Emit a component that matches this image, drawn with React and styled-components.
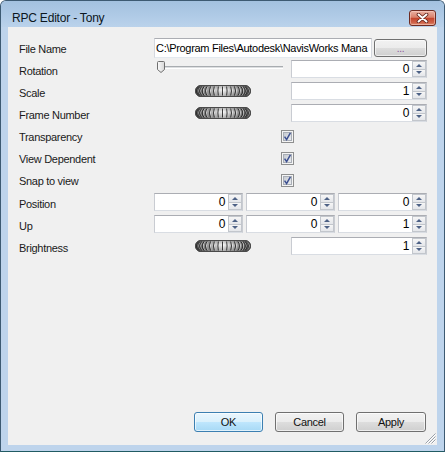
import React from "react";
import styled, { createGlobalStyle } from "styled-components";

const Global = createGlobalStyle`
  html, body { margin: 0; padding: 0; background: #ffffff; }
  body {
    font-family: "Liberation Sans", Arial, sans-serif;
    font-size: 11px;
    letter-spacing: -0.3px;
    color: #000;
  }
  * { box-sizing: border-box; }
`;

const Window = styled.div`
  width: 445px;
  height: 452px;
  display: flex;
  flex-direction: column;
  background: #bed4ec;
  border: 1px solid #3d5a72;
  border-bottom-color: #215b63;
  border-radius: 6px 6px 0 0;
  overflow: hidden;
`;

const TitleBar = styled.div`
  height: 26px;
  flex: none;
  display: flex;
  align-items: flex-start;
  justify-content: space-between;
  padding: 9px 8px 0 11px;
  background: linear-gradient(to bottom, #a3c1df 0%, #afcae6 55%, #bad2eb 100%);
`;

const Title = styled.div`
  font-size: 12px;
  line-height: 14px;
  letter-spacing: -0.2px;
  color: #0b1620;
  padding-top: 1px;
`;

const CloseBtn = styled.div`
  width: 27px;
  height: 16px;
  border: 1px solid #6e2b21;
  border-radius: 3px;
  display: flex;
  align-items: center;
  justify-content: center;
  background: linear-gradient(to bottom, #eab1a3 0%, #d9806b 45%, #c4452d 52%, #d0654b 85%, #e0957a 100%);
  box-shadow: inset 0 0 0 1px rgba(255, 220, 210, 0.45);
`;

const Frame = styled.div`
  flex: 1;
  display: flex;
  min-width: 0;
  padding: 0 7px 6px 7px;
`;

const Content = styled.div`
  flex: 1;
  min-width: 0;
  position: relative;
  display: flex;
  flex-direction: column;
  justify-content: space-between;
  background: #f0f0f0;
  padding: 11px 10px 13px 11px;
`;

const Form = styled.div`
  display: flex;
  flex-direction: column;
`;

const Row = styled.div`
  display: grid;
  grid-template-columns: 135px minmax(0, 1fr);
  align-items: start;
  height: 22px;
  padding-top: ${(p) => p.$pad || 0}px;
`;

const Label = styled.div`
  line-height: 18px;
  padding-top: 2px;
  white-space: nowrap;
  color: #1a1a1a;
`;

const Split = styled.div`
  display: grid;
  grid-template-columns: 137px minmax(0, 1fr);
  align-items: start;
`;

const Triple = styled.div`
  display: grid;
  grid-template-columns: repeat(3, minmax(0, 1fr));
  gap: 3px;
`;

const FileLine = styled.div`
  display: flex;
  align-items: flex-start;
  gap: 2px;
  min-width: 0;
`;

const TextField = styled.div`
  flex: 1;
  min-width: 0;
  height: 20px;
  background: #fff;
  border: 1px solid #abadb3;
  border-color: #abadb3 #d5d8de #e3e9ef #d5d8de;
  padding: 0 1px;
  line-height: 18px;
  font-size: 11px;
  white-space: nowrap;
  overflow: hidden;
`;

const DotsBtn = styled.div`
  flex: none;
  width: 53px;
  height: 18px;
  margin-top: 1px;
  border: 1px solid #707070;
  border-radius: 3px;
  background: linear-gradient(to bottom, #f2f2f2 0%, #ebebeb 50%, #dddddd 51%, #cfcfcf 100%);
  box-shadow: inset 0 0 0 1px rgba(255, 255, 255, 0.6);
  color: #8a4f9a;
  font-size: 10px;
  text-align: center;
  line-height: 17px;
`;

const SpinWrap = styled.div`
  height: 18px;
  min-width: 0;
  display: flex;
  background: #fff;
  border: 1px solid #abadb3;
  border-color: #abadb3 #c9ccd2 #d9dde3 #c9ccd2;
`;

const SpinValue = styled.div`
  flex: 1;
  text-align: right;
  padding-right: 3px;
  font-size: 12px;
  line-height: 16px;
`;

const SpinBtns = styled.div`
  width: 14px;
  display: flex;
  flex-direction: column;
`;

const SpinBtn = styled.div`
  flex: 1;
  display: flex;
  align-items: center;
  justify-content: center;
  border: 1px solid #c2c6cc;
  border-top-width: ${(p) => (p.$down ? 0 : 1)}px;
  background: linear-gradient(to bottom, #f6f6f6, #e4e6ea);
`;

const Center = styled.div`
  height: 18px;
  display: flex;
  align-items: center;
  justify-content: center;
`;

const SliderBox = styled.div`
  position: relative;
  height: 18px;
`;

const Track = styled.div`
  position: absolute;
  left: 4px;
  right: 8px;
  top: 6px;
  height: 3px;
  border-top: 1px solid #a8acb0;
  border-bottom: 1px solid #ffffff;
  background: #dcdee0;
`;

const Thumb = styled.div`
  position: absolute;
  left: 3px;
  top: 1px;
  width: 8px;
  height: 12px;
  display: flex;
`;

const CheckCell = styled.div`
  padding-left: 127px;
  padding-top: 4px;
  display: flex;
`;

const ButtonBar = styled.div`
  display: flex;
  justify-content: flex-end;
  gap: 12px;
  padding-right: 1px;
`;

const Button = styled.div`
  width: ${(p) => p.$w || 69}px;
  height: 20px;
  border: 1px solid ${(p) => (p.$default ? "#3c7fb1" : "#707070")};
  border-radius: 3px;
  background: ${(p) =>
    p.$default
      ? "linear-gradient(to bottom, #eaf6fd 0%, #d9f0fc 50%, #bee6fd 51%, #a7d9f5 100%)"
      : "linear-gradient(to bottom, #f2f2f2 0%, #ebebeb 50%, #dddddd 51%, #cfcfcf 100%)"};
  box-shadow: inset 0 0 0 1px rgba(255, 255, 255, 0.65);
  text-align: center;
  line-height: 18px;
  font-size: 11px;
  color: #111;
`;

const Grip = styled.div`
  position: absolute;
  right: 1px;
  bottom: 1px;
  width: 11px;
  height: 11px;
  display: flex;
`;

function Arrow({ down }) {
  return (
    <svg width="6" height="3" viewBox="0 0 6 3">
      {down ? (
        <path d="M0 0 H6 L3 3 Z" fill="#4d6185" />
      ) : (
        <path d="M0 3 H6 L3 0 Z" fill="#4d6185" />
      )}
    </svg>
  );
}

function Spin({ value }) {
  return (
    <SpinWrap>
      <SpinValue>{value}</SpinValue>
      <SpinBtns>
        <SpinBtn>
          <Arrow />
        </SpinBtn>
        <SpinBtn $down>
          <Arrow down />
        </SpinBtn>
      </SpinBtns>
    </SpinWrap>
  );
}

function Jog() {
  const ridges = Array.from({ length: 17 }, (_, i) => {
    const k = i - 8;
    const t = (k / 9) * (Math.PI / 2);
    return { x: 27.5 + 24 * Math.sin(t), b: 2.4 * Math.sin(t) };
  });
  return (
    <svg width="56" height="12" viewBox="0 0 56 12">
      <defs>
        <linearGradient id="jogGrad" x1="0" x2="1" y1="0" y2="0">
          <stop offset="0" stopColor="#3c3c3c" />
          <stop offset="0.2" stopColor="#9c9c9c" />
          <stop offset="0.5" stopColor="#f6f6f6" />
          <stop offset="0.8" stopColor="#9c9c9c" />
          <stop offset="1" stopColor="#3c3c3c" />
        </linearGradient>
        <linearGradient id="jogShade" x1="0" x2="0" y1="0" y2="1">
          <stop offset="0" stopColor="#000" stopOpacity="0.25" />
          <stop offset="0.4" stopColor="#000" stopOpacity="0" />
          <stop offset="1" stopColor="#000" stopOpacity="0.3" />
        </linearGradient>
      </defs>
      <rect x="0.5" y="0.5" width="55" height="11" rx="5.5" fill="url(#jogGrad)" stroke="#505050" />
      {ridges.map((r, i) => (
        <g key={i}>
          <path
            d={`M${(r.x + 0.9).toFixed(2)} 1.5 Q${(r.x + 0.9 + r.b * 2).toFixed(2)} 6 ${(r.x + 0.9).toFixed(2)} 10.5`}
            stroke="#ffffff"
            strokeOpacity="0.8"
            strokeWidth="0.8"
            fill="none"
          />
          <path
            d={`M${r.x.toFixed(2)} 1.5 Q${(r.x + r.b * 2).toFixed(2)} 6 ${r.x.toFixed(2)} 10.5`}
            stroke="#2a2a2a"
            strokeWidth="0.9"
            fill="none"
          />
        </g>
      ))}
      <rect x="0.5" y="0.5" width="55" height="11" rx="5.5" fill="url(#jogShade)" stroke="#4a4a4a" />
    </svg>
  );
}

function Check() {
  return (
    <svg width="13" height="13" viewBox="0 0 13 13">
      <defs>
        <linearGradient id="cbIn" x1="0" x2="1" y1="0" y2="1">
          <stop offset="0" stopColor="#c4c8cf" />
          <stop offset="1" stopColor="#eceef1" />
        </linearGradient>
      </defs>
      <rect x="0.5" y="0.5" width="12" height="12" fill="#f4f4f4" stroke="#8e8f8f" />
      <rect x="2.5" y="2.5" width="8" height="8" fill="url(#cbIn)" stroke="#a9aeb6" />
      <path d="M3.6 6.6 L5.6 9.6 L9.4 2.8" stroke="#3f5292" strokeWidth="1.5" fill="none" />
    </svg>
  );
}

function ThumbShape() {
  return (
    <svg width="8" height="12" viewBox="0 0 8 12">
      <defs>
        <linearGradient id="thumbG" x1="0" x2="1" y1="0" y2="0">
          <stop offset="0" stopColor="#fbfbfb" />
          <stop offset="1" stopColor="#d6d6d6" />
        </linearGradient>
      </defs>
      <path d="M1.5 0.5 H6.5 Q7.5 0.5 7.5 1.5 V8.5 L4 11.5 L0.5 8.5 V1.5 Q0.5 0.5 1.5 0.5 Z" fill="url(#thumbG)" stroke="#6f6f6f" />
    </svg>
  );
}

function CloseX() {
  return (
    <svg width="13" height="10" viewBox="0 0 13 10">
      <path d="M2.5 1.5 L10.5 8.5 M10.5 1.5 L2.5 8.5" stroke="#5b1f16" strokeWidth="3.6" strokeLinecap="round" />
      <path d="M2.5 1.5 L10.5 8.5 M10.5 1.5 L2.5 8.5" stroke="#ffffff" strokeWidth="2" strokeLinecap="round" />
    </svg>
  );
}

function GripShape() {
  return (
    <svg width="11" height="11" viewBox="0 0 11 11">
      {[3, 6, 9].map((o) => (
        <g key={o}>
          <path d={`M${10.5 - o} 10.5 L10.5 ${10.5 - o}`} stroke="#ffffff" strokeWidth="1" />
          <path d={`M${9.5 - o} 10.5 L10.5 ${9.5 - o}`} stroke="#9aa0a8" strokeWidth="1" />
        </g>
      ))}
    </svg>
  );
}

export default function App() {
  return (
    <>
      <Global />
      <Window>
        <TitleBar>
          <Title>RPC Editor - Tony</Title>
          <CloseBtn>
            <CloseX />
          </CloseBtn>
        </TitleBar>
        <Frame>
          <Content>
            <Form>
              <Row>
                <Label>File Name</Label>
                <FileLine>
                  <TextField>C:\Program Files\Autodesk\NavisWorks Mana</TextField>
                  <DotsBtn>...</DotsBtn>
                </FileLine>
              </Row>
              <Row>
                <Label>Rotation</Label>
                <Split>
                  <SliderBox>
                    <Track />
                    <Thumb>
                      <ThumbShape />
                    </Thumb>
                  </SliderBox>
                  <Spin value="0" />
                </Split>
              </Row>
              <Row>
                <Label>Scale</Label>
                <Split>
                  <Center>
                    <Jog />
                  </Center>
                  <Spin value="1" />
                </Split>
              </Row>
              <Row>
                <Label>Frame Number</Label>
                <Split>
                  <Center>
                    <Jog />
                  </Center>
                  <Spin value="0" />
                </Split>
              </Row>
              <Row>
                <Label>Transparency</Label>
                <CheckCell>
                  <Check />
                </CheckCell>
              </Row>
              <Row>
                <Label>View Dependent</Label>
                <CheckCell>
                  <Check />
                </CheckCell>
              </Row>
              <Row>
                <Label>Snap to view</Label>
                <CheckCell>
                  <Check />
                </CheckCell>
              </Row>
              <Row $pad={1}>
                <Label>Position</Label>
                <Triple>
                  <Spin value="0" />
                  <Spin value="0" />
                  <Spin value="0" />
                </Triple>
              </Row>
              <Row $pad={1}>
                <Label>Up</Label>
                <Triple>
                  <Spin value="0" />
                  <Spin value="0" />
                  <Spin value="1" />
                </Triple>
              </Row>
              <Row $pad={1}>
                <Label>Brightness</Label>
                <Split>
                  <Center>
                    <Jog />
                  </Center>
                  <Spin value="1" />
                </Split>
              </Row>
            </Form>
            <ButtonBar>
              <Button $default>OK</Button>
              <Button>Cancel</Button>
              <Button $w={70}>Apply</Button>
            </ButtonBar>
            <Grip>
              <GripShape />
            </Grip>
          </Content>
        </Frame>
      </Window>
    </>
  );
}
